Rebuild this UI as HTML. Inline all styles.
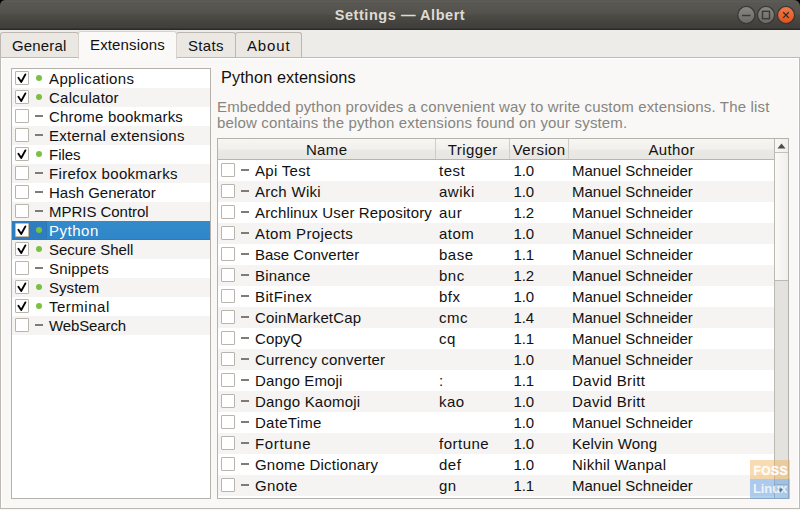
<!DOCTYPE html>
<html><head><meta charset="utf-8">
<style>
*{box-sizing:border-box;margin:0;padding:0}
html,body{width:800px;height:510px;overflow:hidden;background:#f9f8f6;font-family:"Liberation Sans",sans-serif;font-size:15px;letter-spacing:0.15px;color:#3c3c3c}
#title{position:absolute;left:0;top:0;width:800px;height:30px;background:linear-gradient(#54524d 0px,#63605a 1px,#5a5852 2px,#54524c 13px,#4c4a45 16px,#3f3e3a 28px,#2b2a27 29px)}
#title .t{position:absolute;left:0;width:800px;top:7px;text-align:center;color:#dfdbd2;font-weight:bold;font-size:14.5px;letter-spacing:0.55px;line-height:17px}
.wb{position:absolute;top:6px;width:18px;height:18px;border-radius:50%;border:1px solid #36352f}
#tabbar{position:absolute;left:0;top:30px;width:800px;height:28px;background:#eeece9}
.tab{position:absolute;top:2px;height:26px;border:1px solid #bcb8b1;border-bottom:none;border-radius:3px 3px 0 0;background:#ebe8e4;font-size:15px;color:#111;padding-left:11px;line-height:17px;padding-top:4px}
.tab.sel{top:1px;height:28px;background:#faf9f7;border-color:#d6d3ce;padding-left:11px;z-index:2}
#pane{position:absolute;left:0px;top:57px;width:800px;height:452px;border:1px solid #bdb9b3;box-shadow:inset 1px 1px 0 #fff,inset -1px 0 0 #fff;background:#f9f8f6}
#list{position:absolute;left:11px;top:68px;width:200px;height:431px;border:1px solid #b5b1ab;background:#fff}
.li{position:absolute;left:0;width:198px;height:19px;color:#111;line-height:17px}
.li.alt{background:#f5f4f2}
.cb{position:absolute;left:3px;top:2px;width:14px;height:14px;border:1px solid #b8b4ae;background:#fff;border-radius:1px}
.ck{position:absolute;left:0px;top:0px}
.dot{position:absolute;left:24px;top:6px;width:6px;height:6px;border-radius:50%;background:#7ac143}
.dash{position:absolute;left:23px;top:8px;width:8px;height:2px;background:#7f7c77}
.li .tx{position:absolute;left:37px;top:1px;white-space:nowrap}
.li.sel{background:linear-gradient(#338bcc,#2f86c8);color:#fff;border-bottom:1px solid #2a7cbd}
.li.sel .ic{position:absolute;left:0;top:0;width:35px;height:18px;background:#2c7ec0;border-right:1px solid #2a78b8}
.li.sel .cb{border-color:#cdb9a3}
#wm{position:absolute;left:750px;top:460px;width:40px;height:39px}
#wm .o{position:absolute;left:0;top:0;width:40px;height:19px;background:rgba(240,172,80,0.44)}
#wm .b{position:absolute;left:0;top:19px;width:40px;height:20px;background:rgba(85,155,228,0.46)}
#wm .t1{position:absolute;left:3.5px;top:5px;font-weight:bold;font-size:12px;letter-spacing:0.45px;color:rgba(255,255,255,0.92);-webkit-text-stroke:0.5px rgba(255,255,255,0.85);line-height:12px}
#wm .t2{position:absolute;left:3px;top:22px;font-weight:bold;font-size:13px;letter-spacing:-0.1px;color:rgba(255,255,255,0.78);line-height:14px}
#heading{position:absolute;left:221px;top:67.6px;font-size:16.3px;color:#111;letter-spacing:0.1px;line-height:19px}
#desc{position:absolute;left:217px;top:98.6px;width:580px;color:#878580;line-height:16.5px;letter-spacing:0.16px}
#table{position:absolute;left:217px;top:138px;width:572px;height:361px;border:1px solid #b5b1ab;background:#fff;overflow:hidden}
#hdr{position:absolute;left:0;top:0;width:556px;height:21px;background:linear-gradient(#f8f6f3 0%,#f2f0ed 50%,#ebe9e6 56%,#e8e6e2 100%);border-bottom:1px solid #b8b4ae;z-index:3}
.hc{position:absolute;top:0;height:20px;letter-spacing:0.4px;text-indent:0.4px;border-right:1px solid #d0ccc6;text-align:center;color:#111;padding-top:2px;line-height:17px}
.row{position:absolute;left:0;width:556px;height:21px;color:#111;line-height:17px}
.row.alt{background:#f5f4f2}
.row .cb{left:3px;top:3px}
.row .dash{left:23px;top:9px}
.row span{position:absolute;top:2px;white-space:nowrap}
.row .c1{left:37px}.row .c2{left:221px;letter-spacing:0.5px}.row .c3{left:295.5px;letter-spacing:-0.1px}.row .c4{left:354px}
#vs{position:absolute;left:556px;top:0;width:14px;height:359px;background:#e4e2df;border-left:1px solid #bcb8b2}
#vs .up{position:absolute;left:0;top:0;width:13px;height:14px;background:linear-gradient(90deg,#f9f8f6,#efeeeb);border-bottom:1px solid #c4c0ba}
#vs .sl{position:absolute;left:0;top:14px;width:13px;height:128px;background:linear-gradient(90deg,#fbfaf9,#f0efed);border-bottom:1px solid #bcb8b2}
#vs .dn{position:absolute;left:0;top:345px;width:13px;height:14px;background:linear-gradient(90deg,#f9f8f6,#efeeeb);border-top:1px solid #c4c0ba}
</style></head><body>
<div id="title"><div class="t">Settings — Albert</div>
<svg style="position:absolute;left:0;top:0" width="800" height="30">
<defs>
<linearGradient id="gg" x1="0" y1="0" x2="0" y2="1"><stop offset="0" stop-color="#8a8884"/><stop offset="1" stop-color="#6b6965"/></linearGradient>
<linearGradient id="og" x1="0" y1="0" x2="0" y2="1"><stop offset="0" stop-color="#f07a4a"/><stop offset="1" stop-color="#e0531f"/></linearGradient>
</defs>
<circle cx="746.3" cy="15" r="8.6" fill="url(#gg)" stroke="#393834" stroke-width="1.3"/>
<circle cx="766" cy="15" r="8.6" fill="url(#gg)" stroke="#393834" stroke-width="1.3"/>
<circle cx="786" cy="15" r="8.6" fill="url(#og)" stroke="#393834" stroke-width="1.3"/>
<line x1="742" y1="15.5" x2="750.5" y2="15.5" stroke="#3a3935" stroke-width="1.4"/>
<rect x="762.5" y="11.3" width="7" height="7.4" fill="none" stroke="#3a3935" stroke-width="1.4"/>
<path d="M783.2 12.3 L788.8 17.9 M788.8 12.3 L783.2 17.9" stroke="#2d2c29" stroke-width="1.3"/>
<path d="M794 0 L800 0 L800 6 Q799.5 0.5 794 0Z" fill="#000"/><path d="M0 0 L5 0 Q0.5 0.5 0 5Z" fill="#000"/>
</svg>
</div>
<div id="tabbar">
<div class="tab" style="left:0px;width:79px;padding-left:11px">General</div>
<div class="tab sel" style="left:78px;width:99px">Extensions</div>
<div class="tab" style="left:176px;width:60px;letter-spacing:0.35px">Stats</div>
<div class="tab" style="left:235px;width:67px;letter-spacing:0.85px">About</div>
</div>
<div id="pane"></div>
<div id="list">
<div class="li" style="top:0px"><div class="cb"><svg class="ck" width="12" height="12" viewBox="0 0 12 12"><path d="M2.4 5.8 L5.2 10 L9.4 2.4" fill="none" stroke="#000" stroke-width="1.9" stroke-linecap="round" stroke-linejoin="round"/></svg></div><div class="dot"></div><span class="tx" style="letter-spacing:0.379px">Applications</span></div>
<div class="li alt" style="top:19px"><div class="cb"><svg class="ck" width="12" height="12" viewBox="0 0 12 12"><path d="M2.4 5.8 L5.2 10 L9.4 2.4" fill="none" stroke="#000" stroke-width="1.9" stroke-linecap="round" stroke-linejoin="round"/></svg></div><div class="dot"></div><span class="tx" style="letter-spacing:0.230px">Calculator</span></div>
<div class="li" style="top:38px"><div class="cb"></div><div class="dash"></div><span class="tx" style="letter-spacing:0.198px">Chrome bookmarks</span></div>
<div class="li alt" style="top:57px"><div class="cb"></div><div class="dash"></div><span class="tx" style="letter-spacing:0.250px">External extensions</span></div>
<div class="li" style="top:76px"><div class="cb"><svg class="ck" width="12" height="12" viewBox="0 0 12 12"><path d="M2.4 5.8 L5.2 10 L9.4 2.4" fill="none" stroke="#000" stroke-width="1.9" stroke-linecap="round" stroke-linejoin="round"/></svg></div><div class="dot"></div><span class="tx" style="letter-spacing:-0.030px">Files</span></div>
<div class="li alt" style="top:95px"><div class="cb"></div><div class="dash"></div><span class="tx" style="letter-spacing:0.319px">Firefox bookmarks</span></div>
<div class="li" style="top:114px"><div class="cb"></div><div class="dash"></div><span class="tx" style="letter-spacing:-0.002px">Hash Generator</span></div>
<div class="li alt" style="top:133px"><div class="cb"></div><div class="dash"></div><span class="tx" style="letter-spacing:-0.030px">MPRIS Control</span></div>
<div class="li sel" style="top:152px"><div class="ic"></div><div class="cb"><svg class="ck" width="12" height="12" viewBox="0 0 12 12"><path d="M2.4 5.8 L5.2 10 L9.4 2.4" fill="none" stroke="#000" stroke-width="1.9" stroke-linecap="round" stroke-linejoin="round"/></svg></div><div class="dot"></div><span class="tx" style="letter-spacing:0.510px">Python</span></div>
<div class="li alt" style="top:171px"><div class="cb"><svg class="ck" width="12" height="12" viewBox="0 0 12 12"><path d="M2.4 5.8 L5.2 10 L9.4 2.4" fill="none" stroke="#000" stroke-width="1.9" stroke-linecap="round" stroke-linejoin="round"/></svg></div><div class="dot"></div><span class="tx" style="letter-spacing:-0.063px">Secure Shell</span></div>
<div class="li" style="top:190px"><div class="cb"></div><div class="dash"></div><span class="tx" style="letter-spacing:0.201px">Snippets</span></div>
<div class="li alt" style="top:209px"><div class="cb"><svg class="ck" width="12" height="12" viewBox="0 0 12 12"><path d="M2.4 5.8 L5.2 10 L9.4 2.4" fill="none" stroke="#000" stroke-width="1.9" stroke-linecap="round" stroke-linejoin="round"/></svg></div><div class="dot"></div><span class="tx" style="letter-spacing:0.042px">System</span></div>
<div class="li" style="top:228px"><div class="cb"><svg class="ck" width="12" height="12" viewBox="0 0 12 12"><path d="M2.4 5.8 L5.2 10 L9.4 2.4" fill="none" stroke="#000" stroke-width="1.9" stroke-linecap="round" stroke-linejoin="round"/></svg></div><div class="dot"></div><span class="tx" style="letter-spacing:0.510px">Terminal</span></div>
<div class="li alt" style="top:247px"><div class="cb"></div><div class="dash"></div><span class="tx" style="letter-spacing:-0.120px">WebSearch</span></div>
</div>
<div id="heading">Python extensions</div>
<div id="desc">Embedded python provides a convenient way to write custom extensions. The list<br>below contains the python extensions found on your system.</div>
<div id="table">
<div id="hdr">
<div class="hc" style="left:0;width:218px">Name</div>
<div class="hc" style="left:218px;width:74px">Trigger</div>
<div class="hc" style="left:292px;width:59px">Version</div>
<div class="hc" style="left:351px;width:205px;border-right:none">Author</div>
</div>
<div class="row" style="top:21px"><div class="cb"></div><div class="dash"></div><span class="c1" style="letter-spacing:0.304px">Api Test</span><span class="c2">test</span><span class="c3">1.0</span><span class="c4" style="letter-spacing:-0.006px">Manuel Schneider</span></div>
<div class="row alt" style="top:42px"><div class="cb"></div><div class="dash"></div><span class="c1" style="letter-spacing:0.285px">Arch Wiki</span><span class="c2">awiki</span><span class="c3">1.0</span><span class="c4" style="letter-spacing:-0.006px">Manuel Schneider</span></div>
<div class="row" style="top:63px"><div class="cb"></div><div class="dash"></div><span class="c1" style="letter-spacing:0.142px">Archlinux User Repository</span><span class="c2">aur</span><span class="c3">1.2</span><span class="c4" style="letter-spacing:-0.006px">Manuel Schneider</span></div>
<div class="row alt" style="top:84px"><div class="cb"></div><div class="dash"></div><span class="c1" style="letter-spacing:0.375px">Atom Projects</span><span class="c2">atom</span><span class="c3">1.0</span><span class="c4" style="letter-spacing:-0.006px">Manuel Schneider</span></div>
<div class="row" style="top:105px"><div class="cb"></div><div class="dash"></div><span class="c1" style="letter-spacing:-0.002px">Base Converter</span><span class="c2">base</span><span class="c3">1.1</span><span class="c4" style="letter-spacing:-0.006px">Manuel Schneider</span></div>
<div class="row alt" style="top:126px"><div class="cb"></div><div class="dash"></div><span class="c1" style="letter-spacing:0.180px">Binance</span><span class="c2">bnc</span><span class="c3">1.2</span><span class="c4" style="letter-spacing:-0.006px">Manuel Schneider</span></div>
<div class="row" style="top:147px"><div class="cb"></div><div class="dash"></div><span class="c1" style="letter-spacing:0.381px">BitFinex</span><span class="c2">bfx</span><span class="c3">1.0</span><span class="c4" style="letter-spacing:-0.006px">Manuel Schneider</span></div>
<div class="row alt" style="top:168px"><div class="cb"></div><div class="dash"></div><span class="c1" style="letter-spacing:0.150px">CoinMarketCap</span><span class="c2">cmc</span><span class="c3">1.4</span><span class="c4" style="letter-spacing:-0.006px">Manuel Schneider</span></div>
<div class="row" style="top:189px"><div class="cb"></div><div class="dash"></div><span class="c1" style="letter-spacing:0.105px">CopyQ</span><span class="c2">cq</span><span class="c3">1.1</span><span class="c4" style="letter-spacing:-0.006px">Manuel Schneider</span></div>
<div class="row alt" style="top:210px"><div class="cb"></div><div class="dash"></div><span class="c1" style="letter-spacing:0.150px">Currency converter</span><span class="c2"></span><span class="c3">1.0</span><span class="c4" style="letter-spacing:-0.006px">Manuel Schneider</span></div>
<div class="row" style="top:231px"><div class="cb"></div><div class="dash"></div><span class="c1" style="letter-spacing:0.150px">Dango Emoji</span><span class="c2">:</span><span class="c3">1.1</span><span class="c4" style="letter-spacing:0.366px">David Britt</span></div>
<div class="row alt" style="top:252px"><div class="cb"></div><div class="dash"></div><span class="c1" style="letter-spacing:0.210px">Dango Kaomoji</span><span class="c2">kao</span><span class="c3">1.0</span><span class="c4" style="letter-spacing:0.366px">David Britt</span></div>
<div class="row" style="top:273px"><div class="cb"></div><div class="dash"></div><span class="c1" style="letter-spacing:0.279px">DateTime</span><span class="c2"></span><span class="c3">1.0</span><span class="c4" style="letter-spacing:-0.006px">Manuel Schneider</span></div>
<div class="row alt" style="top:294px"><div class="cb"></div><div class="dash"></div><span class="c1" style="letter-spacing:0.630px">Fortune</span><span class="c2">fortune</span><span class="c3">1.0</span><span class="c4" style="letter-spacing:0.114px">Kelvin Wong</span></div>
<div class="row" style="top:315px"><div class="cb"></div><div class="dash"></div><span class="c1" style="letter-spacing:0.198px">Gnome Dictionary</span><span class="c2">def</span><span class="c3">1.0</span><span class="c4" style="letter-spacing:0.240px">Nikhil Wanpal</span></div>
<div class="row alt" style="top:336px"><div class="cb"></div><div class="dash"></div><span class="c1" style="letter-spacing:0.375px">Gnote</span><span class="c2">gn</span><span class="c3">1.1</span><span class="c4" style="letter-spacing:-0.006px">Manuel Schneider</span></div>
<div class="row" style="top:357px"><div class="cb"></div><div class="dash"></div><span class="c1" style="letter-spacing:0.150px">Google Translate</span><span class="c2">tr</span><span class="c3">1.0</span><span class="c4" style="letter-spacing:-0.006px">Manuel Schneider</span></div>
<div id="vs"><div class="up"><svg style="position:absolute;left:2px;top:4px" width="10" height="6"><path d="M0.5 5.5 L4.5 0.5 L8.5 5.5Z" fill="#4c4b47"/></svg></div><div class="sl"></div><div class="dn"><svg style="position:absolute;left:1px;top:3px" width="10" height="6"><path d="M1 0.5 L5 5 L9 0.5Z" fill="#4c4b47"/></svg></div></div>
</div>
<div id="wm"><div class="o"></div><div class="b"></div><div class="t1">FOSS</div><div class="t2">Linux</div></div>
</body></html>
